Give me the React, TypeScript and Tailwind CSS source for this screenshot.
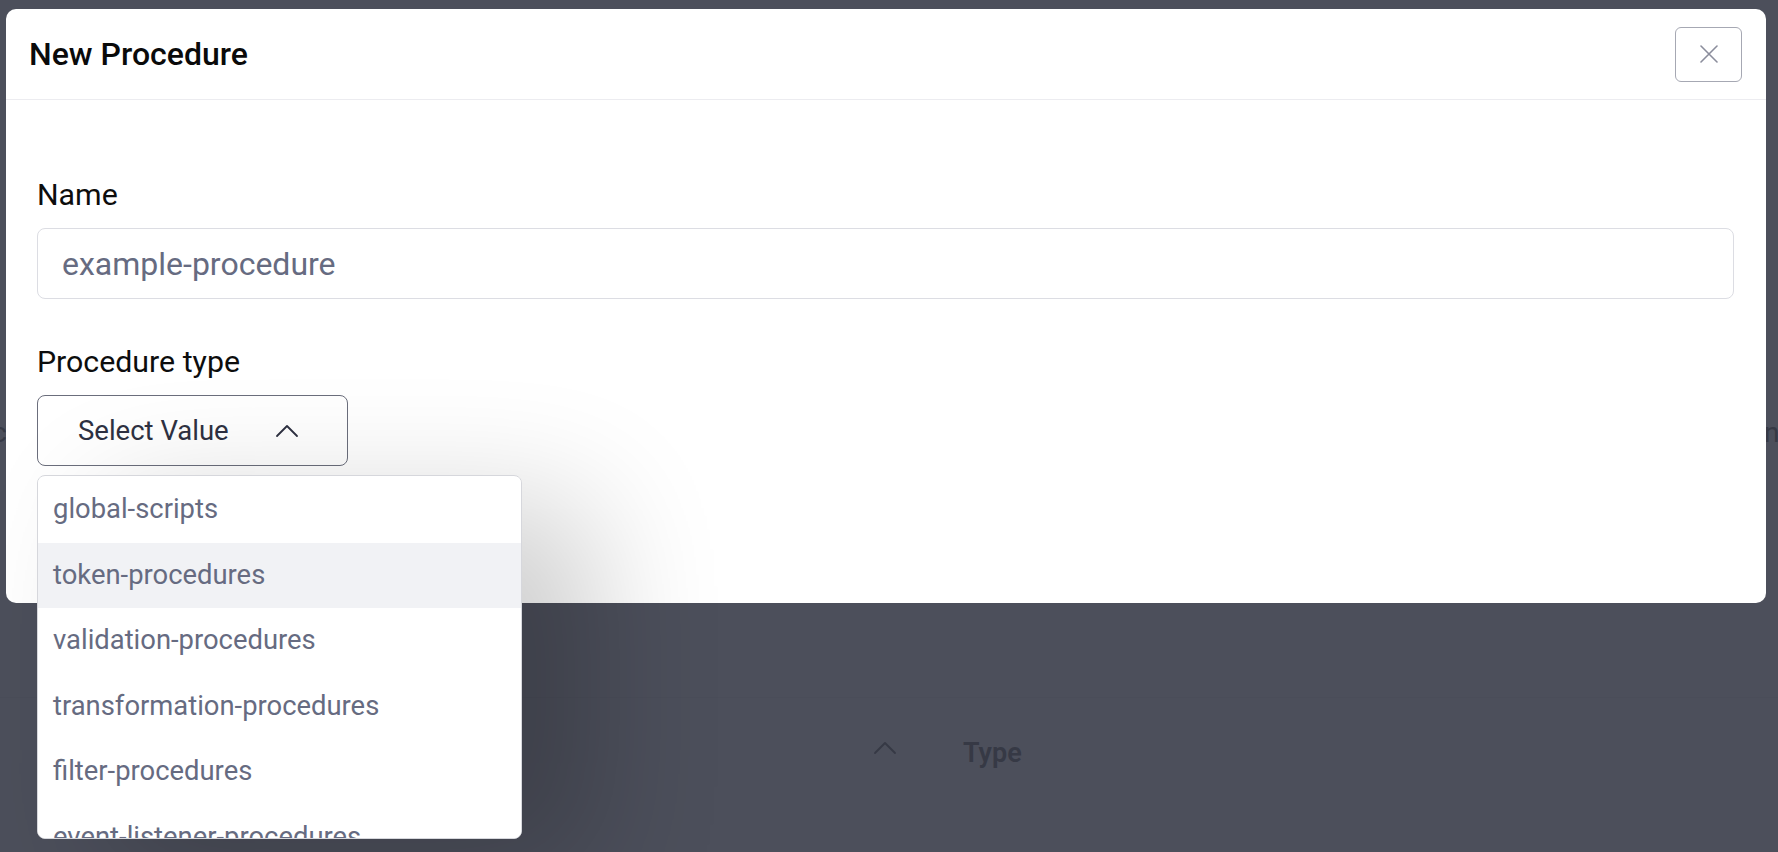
import { useState } from "react";

/* New Procedure dialog — modal over a dimmed page, with the
   "Procedure type" select opened. */

const procedureTypes = [
  "global-scripts",
  "token-procedures",
  "validation-procedures",
  "transformation-procedures",
  "filter-procedures",
  "event-listener-procedures",
];

function CloseIcon() {
  return (
    <svg width="18" height="18" viewBox="0 0 18 18" fill="none" aria-hidden="true">
      <path d="M1 1L17 17M17 1L1 17" stroke="#8b8d9c" strokeWidth="1.6" strokeLinecap="round" />
    </svg>
  );
}

function ChevronUp({ color = "#2e3142" }: { color?: string }) {
  return (
    <svg width="24" height="14" viewBox="0 0 24 14" fill="none" aria-hidden="true">
      <path d="M2 12L12 2L22 12" stroke={color} strokeWidth="1.8" strokeLinecap="round" strokeLinejoin="round" />
    </svg>
  );
}

function ProcedureTypeSelect() {
  const [hovered, setHovered] = useState("token-procedures");

  return (
    <div className="relative w-[311px]">
      <button
        type="button"
        className="flex h-[71px] w-[311px] items-center rounded-[8px] border border-[#6b6e7c] bg-white pl-[40px] pr-[24px]"
      >
        <span className="text-[27.5px] leading-none text-[#2e3142]">Select Value</span>
        <span className="ml-[46px] flex items-center">
          <ChevronUp />
        </span>
      </button>

      {/* Open listbox */}
      <div className="absolute left-0 top-[80px] z-20 h-[364px] w-[485px] overflow-hidden rounded-[8px] border border-[#d6d7dc] bg-white shadow-[70px_30px_130px_rgba(0,0,0,0.2)]">
        <ul className="flex flex-col pt-px">
          {procedureTypes.map((t) => (
            <li
              key={t}
              onMouseEnter={() => setHovered(t)}
              className={
                "flex h-[65.5px] shrink-0 items-center pl-[15px] text-[27.4px] leading-none text-[#666b81] " +
                (hovered === t ? "bg-[#f1f2f5]" : "bg-white")
              }
            >
              {t}
            </li>
          ))}
        </ul>
      </div>
    </div>
  );
}

export default function App() {
  return (
    <div
      className="relative h-[852px] w-full overflow-hidden bg-[#4c4f5b]"
      style={{ fontFamily: "Roboto, 'Noto Sans', sans-serif" }}
    >
      {/* Dimmed page behind the dialog */}
      <div className="absolute inset-0 z-0 text-[#363945]">
        <span className="absolute left-[-8px] top-[414px] text-[28px] leading-[38px]">c</span>
        <span className="absolute left-[1764px] top-[414px] text-[28px] leading-[38px]">n</span>
        <div className="absolute left-0 right-0 top-[697px] h-px bg-[#4a4d59]" />
        <span className="absolute left-[873px] top-[741px]">
          <ChevronUp color="#363945" />
        </span>
        <span className="absolute left-[963px] top-[734px] text-[27px] font-semibold leading-[38px]">Type</span>
      </div>

      {/* Dialog */}
      <div className="relative z-10 ml-[6px] mt-[9px] h-[594px] w-[1760px] rounded-[10px] bg-white">
        <header className="flex h-[91px] items-center justify-between border-b border-[#ececf0] pl-[23px] pr-[24px]">
          <h2 className="text-[32px] font-medium leading-none text-[#0a0a0a]">New Procedure</h2>
          <button
            type="button"
            aria-label="Close"
            className="flex h-[55px] w-[67px] items-center justify-center rounded-[6px] border border-[#a6a8b3] bg-white"
          >
            <CloseIcon />
          </button>
        </header>

        <div className="flex flex-col pl-[31px] pr-[32px] pt-[78px]">
          <label className="text-[30.3px] leading-[34px] text-[#0d0d0d]">Name</label>
          <input
            placeholder="example-procedure"
            className="mt-[16px] h-[71px] w-full rounded-[8px] border border-[#dcdde3] bg-white px-[24px] text-[32px] text-[#2e3142] outline-none placeholder:text-[#666b81]"
          />

          <label className="mt-[46px] text-[30.3px] leading-[34px] text-[#0d0d0d]">Procedure type</label>
          <div className="mt-[16px]">
            <ProcedureTypeSelect />
          </div>
        </div>
      </div>
    </div>
  );
}
